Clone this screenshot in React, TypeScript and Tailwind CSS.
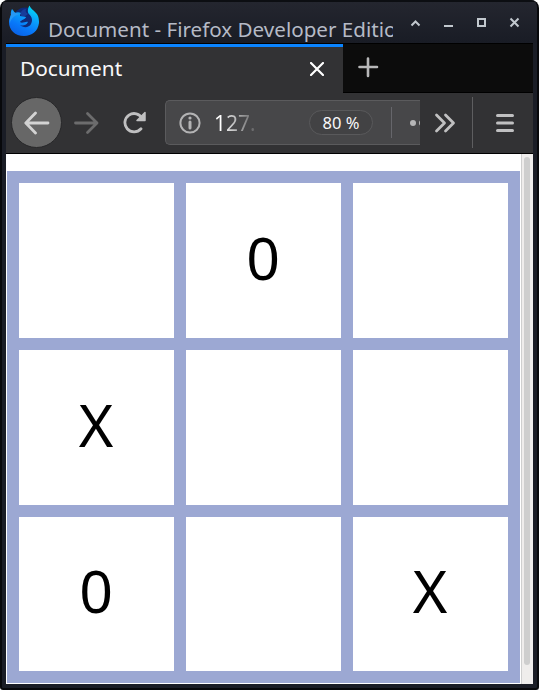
const cells = ["", "0", "", "X", "", "", "0", "", "X"];

function FirefoxLogo() {
  return (
    <svg width="32" height="32" viewBox="0 0 32 32" className="shrink-0">
      <defs>
        <linearGradient id="body" x1="0.8" y1="0" x2="0.3" y2="1">
          <stop offset="0" stopColor="#00e1f5" />
          <stop offset="0.35" stopColor="#0aa5fa" />
          <stop offset="0.7" stopColor="#0878fa" />
          <stop offset="1" stopColor="#0a62e6" />
        </linearGradient>
      </defs>
      <circle cx="17" cy="14" r="11.500" fill="#102a78" />
      <path d="M13 7 C14 5 16 4 18 4 C17 6 18 8 20 9 L16 12 C13 12 12 9 13 7 Z" fill="#173d9b" />
      <path
        d="M4 4 C5.500 5 6 7 7 8 C9 7 11 7 13 8 C12 9 12 10 12 11 L18 12 C18 14 13 15 12 17 C14 19 18 16 20 17 C18 21 14 21 12 20 C15 23 21 23 23 19 C25 15 24 12 21 9 C19 7 20 3 21.500 0.500 C23 5 28 6 30 11 C31 14 31 16 31 18 C30 26 24 31 16 31 C7 31 1 25 1 17 C1 14 2 12 3 10 C2.500 8 3 6 4 4 Z"
        fill="url(#body)"
      />
      <path d="M4 5 C6 8 8 8 12 9 C7 10 3 13 2 18 C1 14 3 11 4 5 Z" fill="#2698f5" />
    </svg>
  );
}

function TitleBar() {
  return (
    <header className="flex h-[43px] border-t-2 border-[#0c0e12] bg-linear-to-b from-[#24262f] to-[#191c25] pl-[6px]">
      <div className="pt-[3px]">
        <FirefoxLogo />
      </div>
      <div className="ml-2 h-[41px] w-[345px] overflow-hidden whitespace-nowrap pt-[13px] text-[20.6px] leading-[28px] text-[#b5bac6]">
        Document - Firefox Developer Edition
      </div>
      <svg width="120" height="32" viewBox="0 0 120 32" className="ml-[8px] shrink-0" fill="none" stroke="#c2c8ce" strokeWidth="2">
        <path d="M10.500 23.500 L14.500 19.500 L18.500 23.500" />
        <path d="M43 24 H52" />
        <rect x="77" y="17" width="7" height="7" />
        <path d="M109.500 16.500 L117.500 24.500 M117.500 16.500 L109.500 24.500" />
      </svg>
    </header>
  );
}

function Tabs() {
  return (
    <div className="flex h-[50px] border-t border-black bg-[#0c0c0c]">
      <div className="flex h-[49px] w-[337px] justify-between border-t-[3px] border-[#0a84ff] bg-[#323234] pl-[14px] pr-[19px]">
        <span className="pt-[7px] text-[20.8px] leading-[28px] text-[#f9f9fa]">Document</span>
        <svg width="14" height="14" viewBox="0 0 14 14" className="mt-[15px]" stroke="#fff" strokeWidth="2.200" strokeLinecap="round">
          <path d="M1 1 L13 13 M13 1 L1 13" />
        </svg>
      </div>
      <div className="flex grow border-b border-black pl-[15px] pt-[13px]">
        <svg width="21" height="21" viewBox="0 0 21 21" stroke="#b8b8b9" strokeWidth="2.600" strokeLinecap="round">
          <path d="M1.500 10 H19 M10 1.500 V19" />
        </svg>
      </div>
    </div>
  );
}

function Toolbar() {
  return (
    <div className="flex h-[61px] border-b border-black bg-[#323234] pl-[5px] pt-[4px] text-[#c0c0c1]">
      <button className="flex h-[51px] w-[51px] shrink-0 items-center justify-center rounded-full border border-[#272729] bg-[#676767]">
        <svg width="26" height="24" viewBox="0 0 26 24" fill="none" stroke="#d3d3d3" strokeWidth="2.800" strokeLinecap="round" strokeLinejoin="round">
          <path d="M11.500 2 L1.800 12 L11.500 22 M2 12 H24" />
        </svg>
      </button>
      <svg width="26" height="24" viewBox="0 0 26 24" className="ml-[12px] mt-[14px] shrink-0" fill="none" stroke="#6c6c6d" strokeWidth="2.800" strokeLinecap="round" strokeLinejoin="round">
        <path d="M13.500 2.500 L23 12 L13.500 21.500 M1.500 12 H23" />
      </svg>
      <svg width="24" height="24" viewBox="0 0 24 24" className="ml-[23px] mt-[14px] shrink-0" fill="none" stroke="#c0c0c1" strokeWidth="2.800" strokeLinecap="round">
        <path d="M18 17.800 A9.200 9.200 0 1 1 19.300 7.500" />
        <path d="M22 1.500 V9.500 H14 Z" fill="#c0c0c1" strokeWidth="1.500" strokeLinejoin="round" />
      </svg>
      <div className="ml-[18px] mt-[3px] flex h-[45px] w-[255px] shrink-0 items-center overflow-hidden rounded-l-[5px] border border-r-0 border-[#5b5b5d] bg-[#474749]">
        <svg width="22" height="22" viewBox="0 0 22 22" className="ml-[13px] shrink-0" fill="none" stroke="#b3b3b4" strokeWidth="2">
          <circle cx="11" cy="11" r="9.600" />
          <path d="M11 10 V16" strokeWidth="3" strokeLinecap="round" />
          <circle cx="11" cy="6" r="1.600" fill="#b3b3b4" stroke="none" />
        </svg>
        <span className="ml-[13px] w-[50px] shrink-0 bg-linear-to-r from-white from-15% to-[#474749] to-95% bg-clip-text text-[21px] leading-[28px] text-transparent">127.</span>
        <span className="ml-[45px] flex h-[25px] w-[64px] shrink-0 items-center justify-center rounded-full border border-[#59595b] bg-[#424244] text-[16.5px] leading-[24px] text-[#f9f9fa]">80 %</span>
        <i className="ml-[18px] h-[31px] w-px shrink-0 bg-[#66666b]" />
        <i className="ml-[18px] h-[6px] w-[6px] shrink-0 rounded-full bg-[#b6b6b7]" />
        <i className="ml-[3px] h-[6px] w-[6px] shrink-0 rounded-full bg-[#b6b6b7]" />
      </div>
      <svg width="22" height="20" viewBox="0 0 22 20" className="ml-[14px] mt-[16px] shrink-0" fill="none" stroke="#c0c0c1" strokeWidth="2.800" strokeLinecap="round" strokeLinejoin="round">
        <path d="M2.500 2 L10.500 10 L2.500 18 M11.500 2 L19.500 10 L11.500 18" />
      </svg>
      <i className="ml-[16px] h-[51px] w-px shrink-0 bg-[#5e5e60]" />
      <svg width="18" height="20" viewBox="0 0 18 20" className="ml-[23px] mt-[16px] shrink-0" stroke="#c0c0c1" strokeWidth="3" strokeLinecap="round">
        <path d="M1.500 2.500 H16.500 M1.500 10 H16.500 M1.500 17.500 H16.500" />
      </svg>
    </div>
  );
}

export default function App() {
  return (
    <div className="h-[690px] w-[539px] bg-white font-['Noto_Sans',sans-serif]">
      <div className="h-[690px] overflow-hidden rounded-[8px] rounded-b-[3px] border-x-2 border-b-2 border-[#07080b] bg-[#1a1d26]">
        <TitleBar />
        <div className="mx-[4px]">
          <Tabs />
          <Toolbar />
          <main className="flex h-[530px] bg-white">
            <div className="w-[515px] pl-px pt-[17px]">
              <div className="grid h-[512px] w-[513px] grid-cols-[155px_155px_155px] grid-rows-[155px_155px_154px] gap-[12px] bg-[#9ca8d3] p-[12px]">
                {cells.map((mark, i) => (
                  <div key={i} className="flex items-center justify-center bg-white pb-[8px] pr-px text-[59px] leading-[80px] text-black">
                    {mark}
                  </div>
                ))}
              </div>
            </div>
            <div className="w-[12px] border-l border-[#cfcfcf] bg-[#efedec] pl-[2px] pt-[3px]">
              <div className="h-[508px] w-[6px] rounded-full bg-[#cecece]" />
            </div>
          </main>
        </div>
      </div>
    </div>
  );
}
